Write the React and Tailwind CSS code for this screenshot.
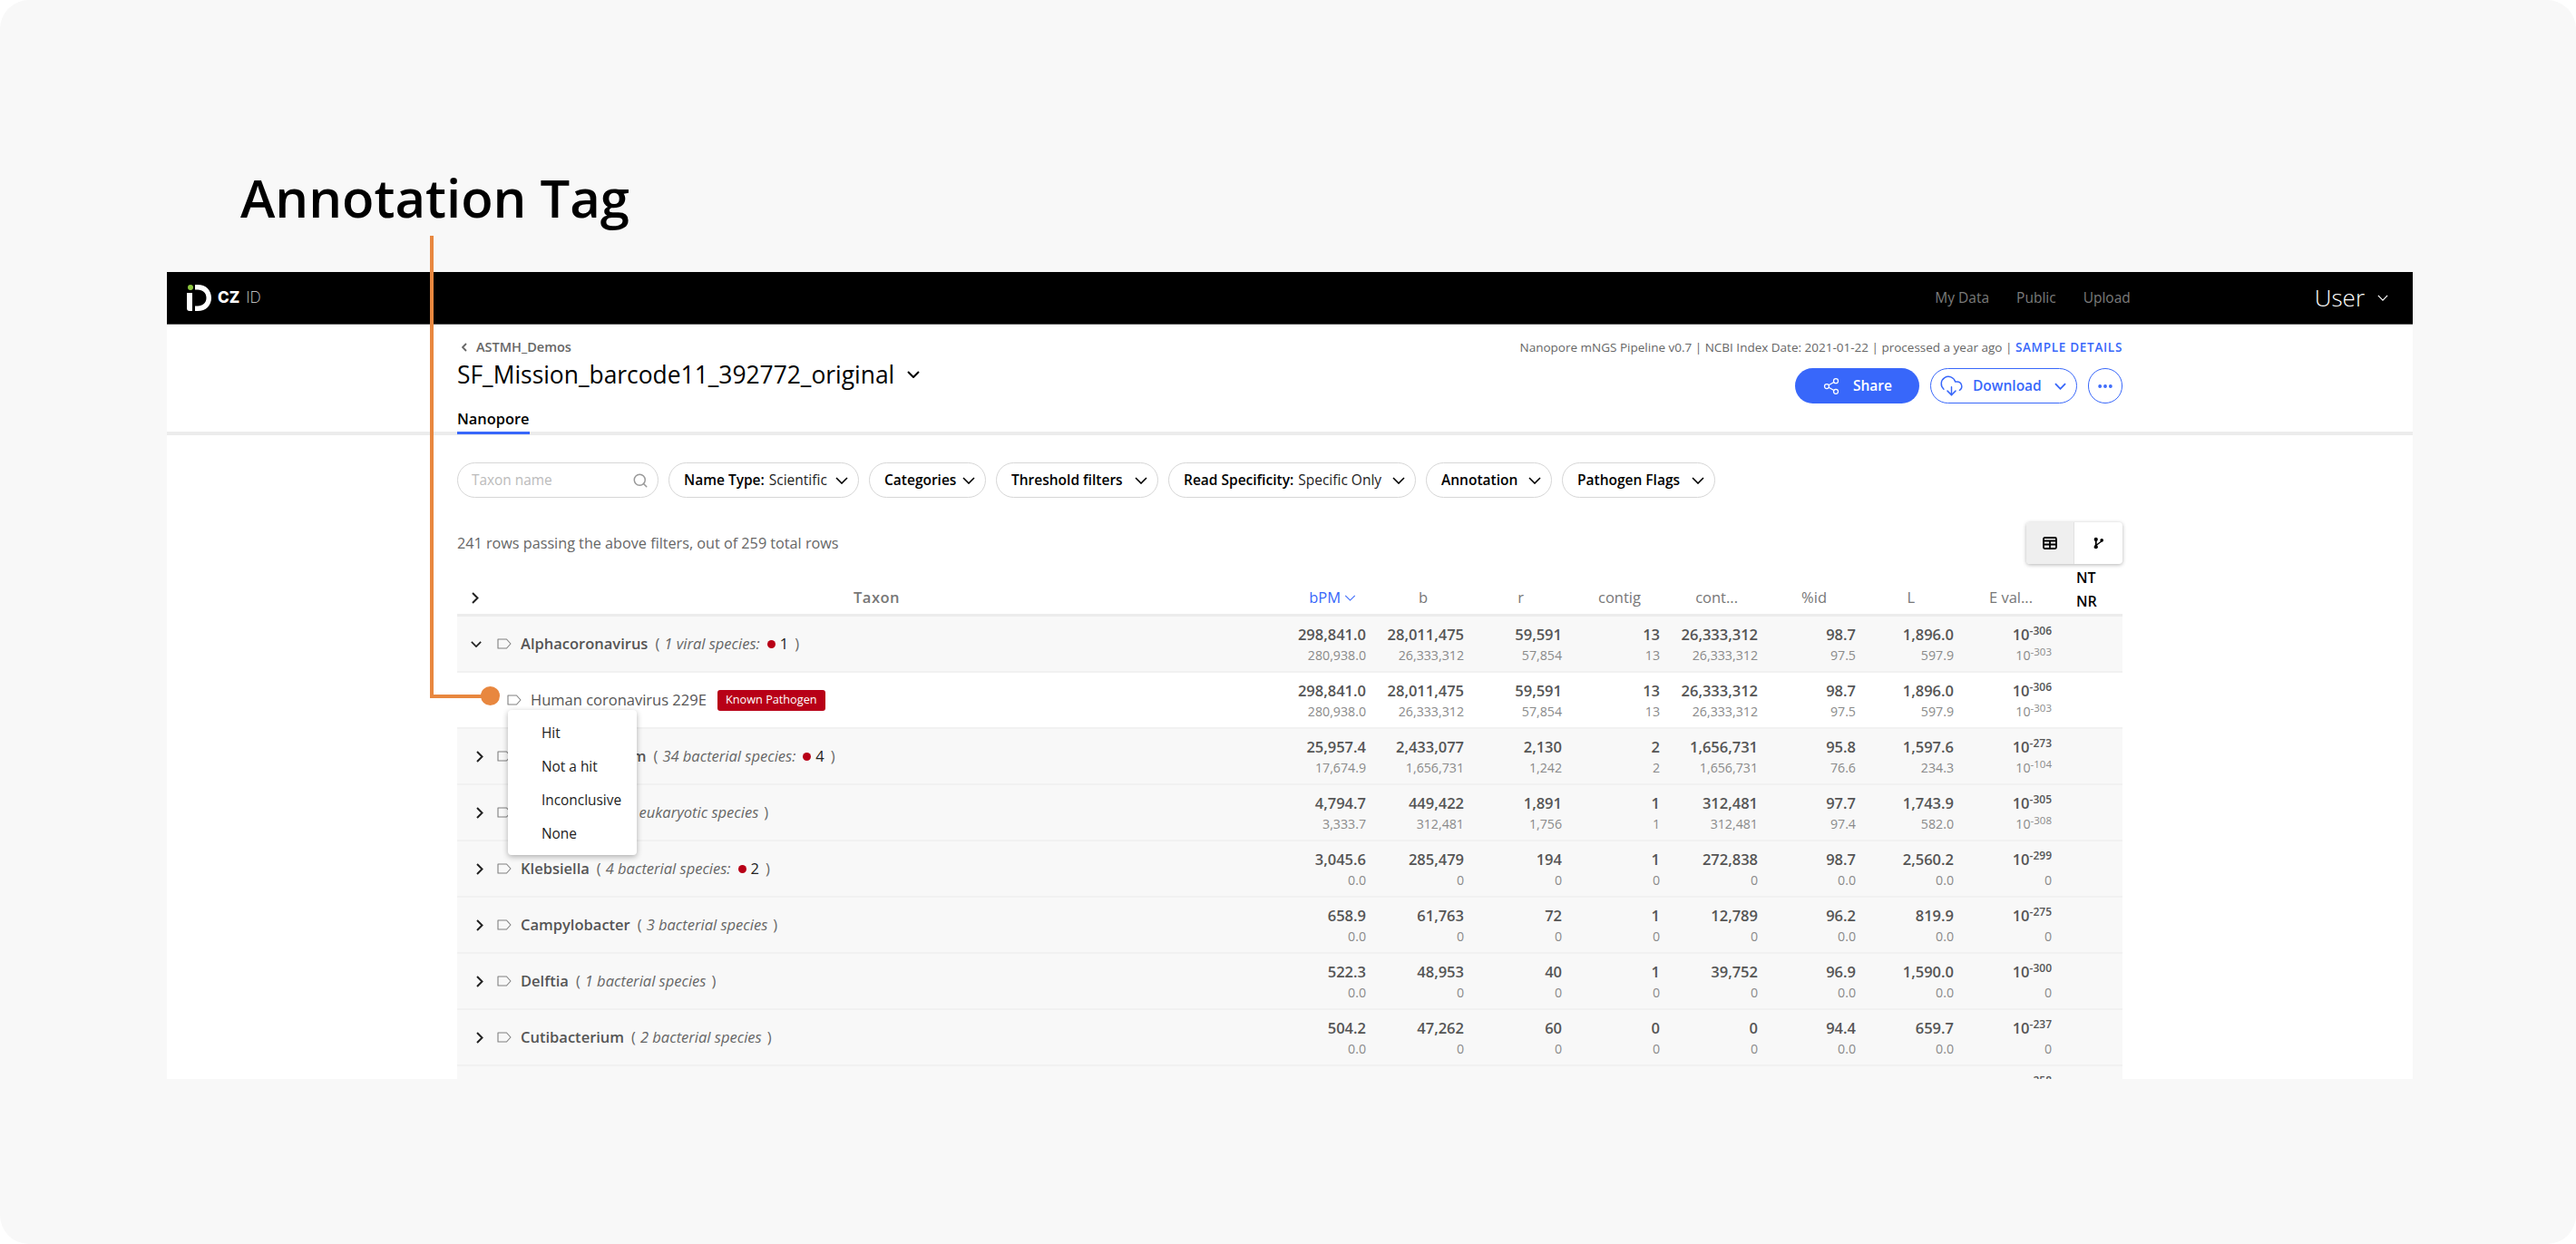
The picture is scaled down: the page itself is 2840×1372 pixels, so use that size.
import React from "react";
import { Search, Share2, CloudDownload, MoreHorizontal } from "lucide-react";

const rows = [
  { name: "Alphacoronavirus", note: "1 viral species:", dot: 1, open: true, a: ["298,841.0", "28,011,475", "59,591", "13", "26,333,312", "98.7", "1,896.0", "-306"], c: ["280,938.0", "26,333,312", "57,854", "13", "26,333,312", "97.5", "597.9", "-303"] },
  { child: true, name: "Human coronavirus 229E", a: ["298,841.0", "28,011,475", "59,591", "13", "26,333,312", "98.7", "1,896.0", "-306"], c: ["280,938.0", "26,333,312", "57,854", "13", "26,333,312", "97.5", "597.9", "-303"] },
  { name: "Corynebacterium", note: "34 bacterial species:", dot: 4, a: ["25,957.4", "2,433,077", "2,130", "2", "1,656,731", "95.8", "1,597.6", "-273"], c: ["17,674.9", "1,656,731", "1,242", "2", "1,656,731", "76.6", "234.3", "-104"] },
  { name: "Plasmodium", note: "1 eukaryotic species", a: ["4,794.7", "449,422", "1,891", "1", "312,481", "97.7", "1,743.9", "-305"], c: ["3,333.7", "312,481", "1,756", "1", "312,481", "97.4", "582.0", "-308"] },
  { name: "Klebsiella", note: "4 bacterial species:", dot: 2, a: ["3,045.6", "285,479", "194", "1", "272,838", "98.7", "2,560.2", "-299"], c: ["0.0", "0", "0", "0", "0", "0.0", "0.0", "0"] },
  { name: "Campylobacter", note: "3 bacterial species", a: ["658.9", "61,763", "72", "1", "12,789", "96.2", "819.9", "-275"], c: ["0.0", "0", "0", "0", "0", "0.0", "0.0", "0"] },
  { name: "Delftia", note: "1 bacterial species", a: ["522.3", "48,953", "40", "1", "39,752", "96.9", "1,590.0", "-300"], c: ["0.0", "0", "0", "0", "0", "0.0", "0.0", "0"] },
  { name: "Cutibacterium", note: "2 bacterial species", a: ["504.2", "47,262", "60", "0", "0", "94.4", "659.7", "-237"], c: ["0.0", "0", "0", "0", "0", "0.0", "0.0", "0"] },
  { name: "Staphylococcus", note: "1 bacterial species", a: ["455.9", "42,855", "50", "1", "15,027", "91.2", "849.7", "-258"], c: ["0.0", "0", "0", "0", "0", "0.0", "0.0", "0"] },
];

const headers = [
  { t: "b", pad: "pr-[40px]" },
  { t: "r", pad: "pr-[42px]" },
  { t: "contig", pad: "pr-[21px]" },
  { t: "cont...", pad: "pr-[22px]" },
  { t: "%id", pad: "pr-[32px]" },
  { t: "L", pad: "pr-[43px]" },
  { t: "E val...", pad: "pr-[21px]" },
];

function Vee({ className, w = 1.6 }) {
  return (
    <svg viewBox="0 0 14 8" className={className} fill="none" stroke="currentColor" strokeWidth={w}>
      <path d="M1 1 L7 7 L13 1" />
    </svg>
  );
}

function Caret({ className }) {
  return (
    <svg viewBox="0 0 8 13" className={`w-[8px] h-[13px] shrink-0 ${className}`} fill="none" stroke="currentColor" strokeWidth="2">
      <path d="M1 1 L6.5 6.5 L1 12" />
    </svg>
  );
}

function TagIcon({ className }) {
  return (
    <svg viewBox="0 0 16 12" className={`w-[16px] h-[12px] shrink-0 text-[#808080] ${className}`} fill="none" stroke="currentColor" strokeWidth="1.1">
      <path d="M1 1 H10.5 L15 6 L10.5 11 H1 Z" strokeLinejoin="round" />
    </svg>
  );
}

function Logo() {
  return (
    <div className="flex items-center">
      <svg viewBox="0 0 27 29" className="w-[27px] h-[29px]">
        <circle cx="4" cy="3" r="3" fill="#8cc63f" />
        <path d="M0 9 H6 V29 H3 Q0 29 0 26 Z" fill="#fff" />
        <path d="M9 0 H12 C21 0 27 6 27 14.5 C27 23 21 29 12 29 H9 V23.5 H12 C17.500 23.500 21.500 20 21.500 14.500 C21.500 9 17.500 5.500 12 5.500 H9 Z" fill="#fff" />
      </svg>
      <span className="ml-[7px] text-[17px] leading-none font-extrabold text-white font-['Inter',sans-serif]">CZ</span>
      <span className="ml-[7px] text-[17px] leading-none font-extralight text-[#ddd] font-['Inter',sans-serif]">ID</span>
    </div>
  );
}

function Pill({ label, value, width }) {
  return (
    <div className={`flex items-center shrink-0 h-[39px] border border-[#d6d6d6] rounded-[20px] pl-[16px] pr-[11px] text-[15.500px] text-black ${width}`}>
      <span className="font-semibold whitespace-nowrap">{label}</span>
      {value && <span className="ml-[5px] whitespace-nowrap text-[#222]">{value}</span>}
      <Vee className="w-[14px] h-[8px] ml-auto shrink-0" />
    </div>
  );
}

function Row({ row }) {
  const bg = row.child ? "bg-white" : "bg-[#f8f8f8]";
  return (
    <div className={`flex h-[62px] shrink-0 border-b-2 border-[#f1f1f1] ${bg}`}>
      <div className={`flex items-center w-[894px] shrink-0 text-[16.500px] ${row.child ? "pl-[55px]" : row.open ? "pl-[15px]" : "pl-[21px]"}`}>
        {row.child ? null : row.open ? (
          <Vee className="w-[12px] h-[7px] shrink-0 text-[#222]" w={2} />
        ) : (
          <Caret className="text-[#222]" />
        )}
        <TagIcon className={row.child ? "" : row.open ? "ml-[17px]" : "ml-[15px]"} />
        {row.child ? (
          <>
            <span className="ml-[10px] text-[#555] whitespace-nowrap">{row.name}</span>
            <span className="ml-[12px] h-[23px] w-[119px] flex items-center justify-center rounded-[3px] bg-[#b80017] text-white text-[12.700px] whitespace-nowrap">Known Pathogen</span>
          </>
        ) : (
          <>
            <span className="ml-[10px] font-semibold text-[#555] whitespace-nowrap">{row.name}</span>
            <span className="ml-[8px] text-[#666] whitespace-nowrap">
              (<span className="ml-[5px] italic">{row.note}</span>
            </span>
            {row.dot && <span className="ml-[8px] w-[9px] h-[9px] rounded-full bg-[#b80017]" />}
            {row.dot && <span className="ml-[5px] text-[#222]">{row.dot}</span>}
            <span className={`${row.dot ? "ml-[7px]" : "ml-[6px]"} text-[#666]`}>)</span>
          </>
        )}
      </div>
      {row.a.map((v, i) => (
        <div key={i} className="w-[108px] text-right pt-[9px] shrink-0 whitespace-nowrap">
          <div className="text-[16.500px] leading-[21px] font-semibold text-[#555]">
            {i === 7 ? (
              <>
                10<sup className="text-[12px] -top-[6px] relative align-baseline">{v}</sup>
              </>
            ) : (
              v
            )}
          </div>
          <div className="text-[14.200px] leading-[26px] text-[#8a8a8a]">
            {i === 7 && row.c[i] !== "0" ? (
              <>
                10<sup className="text-[11.500px] -top-[5px] relative align-baseline">{row.c[i]}</sup>
              </>
            ) : (
              row.c[i]
            )}
          </div>
        </div>
      ))}
    </div>
  );
}

export default function App() {
  return (
    <div className="relative w-[2840px] h-[1372px] overflow-hidden bg-white font-['Open_Sans',sans-serif]">
      <div className="h-full rounded-[32px] bg-[#f8f8f8]">
        <div className="h-[300px] pl-[265px] pt-[176px]">
          <h1 className="text-[58px] leading-[84px] font-semibold text-black whitespace-nowrap">Annotation Tag</h1>
        </div>

        <div className="ml-[184px] w-[2476px] h-[890px] bg-white flex flex-col overflow-hidden">
          <div className="flex items-center shrink-0 h-[58px] bg-black border-b border-[#555] pl-[22px] pr-[27px]">
            <Logo />
            <div className="ml-auto flex items-center text-[15.500px] text-[#7b7b7b]">
              <span className="mr-[30px]">My Data</span>
              <span className="mr-[30px]">Public</span>
              <span>Upload</span>
              <span className="ml-[203px] text-[26px] text-white font-light">User</span>
              <Vee className="ml-[14px] w-[12px] h-[7px] text-white" w={1.4} />
            </div>
          </div>

          <div className="shrink-0 h-[122px] border-b-4 border-[#ececec] pl-[320px] pr-[320px] flex justify-between">
            <div className="flex flex-col">
              <div className="flex items-center mt-[15px] h-[20px] text-[14.500px] font-semibold text-[#666]">
                <svg viewBox="0 0 6 10" className="w-[6px] h-[10px] ml-[5px] mr-[10px]" fill="none" stroke="currentColor" strokeWidth="1.8">
                  <path d="M5 1 L1 5 L5 9" />
                </svg>
                <span>ASTMH_Demos</span>
              </div>
              <div className="flex items-center mt-[2px]">
                <span className="text-[26.400px] leading-[36px] text-black font-medium">SF_Mission_barcode11_392772_original</span>
                <Vee className="ml-[14px] w-[14px] h-[8px] text-black" w={2} />
              </div>
              <div className="mt-auto -mb-[3px] h-[30px] w-fit border-b-[3px] border-[#3867fa] text-[16.400px] leading-[26px] font-semibold text-black">Nanopore</div>
            </div>
            <div className="flex flex-col items-end">
              <div className="mt-[15px] h-[20px] leading-[20px] text-[13.500px] text-[#666] whitespace-nowrap">
                Nanopore mNGS Pipeline v0.7 | NCBI Index Date: 2021-01-22 | processed a year ago |{" "}
                <span className="font-semibold text-[#3867fa] tracking-[0.7px]">SAMPLE DETAILS</span>
              </div>
              <div className="flex mt-[13px]">
                <div className="flex items-center justify-center w-[137px] h-[39px] rounded-[20px] bg-[#3867fa] text-white text-[15.500px] font-semibold">
                  <Share2 className="w-[20px] h-[20px] mr-[14px]" strokeWidth={1.5} />
                  Share
                </div>
                <div className="flex items-center ml-[12px] w-[162px] h-[39px] pl-[9px] rounded-[20px] border border-[#3867fa] text-[#3867fa] text-[15.500px] font-semibold">
                  <CloudDownload className="w-[27px] h-[27px] mr-[10px]" strokeWidth={1.3} />
                  Download
                  <Vee className="w-[13px] h-[8px] ml-[14px]" w={2} />
                </div>
                <div className="flex items-center justify-center ml-[12px] w-[38px] h-[39px] rounded-full border border-[#3867fa] text-[#3867fa]">
                  <MoreHorizontal className="w-[20px] h-[20px]" strokeWidth={2.6} />
                </div>
              </div>
            </div>
          </div>

          <div className="flex-1 min-h-0 pl-[320px] pr-[320px] overflow-hidden">
            <div className="flex gap-[11px] mt-[30px]">
              <div className="flex items-center shrink-0 w-[222px] h-[39px] border border-[#d6d6d6] rounded-[20px] pl-[15px] pr-[10px] text-[15.400px] text-[#bbb]">
                Taxon name
                <Search className="ml-auto w-[18px] h-[18px] text-[#999]" strokeWidth={2} />
              </div>
              <Pill label="Name Type:" value="Scientific" width="w-[210px]" />
              <Pill label="Categories" width="w-[129px]" />
              <Pill label="Threshold filters" width="w-[179px]" />
              <Pill label="Read Specificity:" value="Specific Only" width="w-[273px]" />
              <Pill label="Annotation" width="w-[139px]" />
              <Pill label="Pathogen Flags" width="w-[169px]" />
            </div>

            <div className="flex items-center justify-between mt-[27px] h-[46px]">
              <span className="text-[16.200px] text-[#666]">241 rows passing the above filters, out of 259 total rows</span>
              <div className="flex h-[46px] rounded-[4px] overflow-hidden shadow-[0_1px_4px_rgba(0,0,0,0.3)] bg-white">
                <div className="w-[53px] flex items-center justify-center bg-[#efefef] border-r border-[#e2e2e2]">
                  <svg viewBox="0 0 16 14" className="w-[16px] h-[14px] text-black" fill="none" stroke="currentColor" strokeWidth="1.8">
                    <rect x="1" y="1" width="14" height="12" rx="1.5" />
                    <path d="M1 4.500 H15 M1 8.500 H15 M8 4.500 V13" />
                  </svg>
                </div>
                <div className="w-[53px] flex items-center justify-center">
                  <svg viewBox="0 0 12 14" className="w-[11px] h-[14px] text-black" fill="currentColor">
                    <circle cx="3" cy="2.500" r="2.300" />
                    <circle cx="10" cy="3.500" r="2" />
                    <circle cx="3" cy="11.500" r="2.300" />
                    <path d="M2 2.500 H4 V11.500 H2 Z M3 9 L9.500 4 L10.500 5 L4 10 Z" />
                  </svg>
                </div>
              </div>
            </div>

            <div className="flex items-center h-[58px] pt-[19px] border-b-[3px] border-[#ececec] text-[16.500px]">
              <div className="w-[894px] shrink-0 flex items-center pl-[16px] font-semibold text-[#777]">
                <Caret className="text-[#222]" />
                <span className="ml-[413px] tracking-[0.5px]">Taxon</span>
              </div>
              <div className="w-[108px] shrink-0 flex items-center justify-end pr-[11px] text-[#3867fa]">
                bPM
                <Vee className="ml-[4px] w-[13px] h-[7px]" w={1.2} />
              </div>
              {headers.map((h) => (
                <div key={h.t} className={`w-[108px] shrink-0 text-right text-[#777] ${h.pad}`}>
                  {h.t}
                </div>
              ))}
              <div className="self-start -mt-[17px] pl-[27px] flex flex-col text-[16px] leading-[26px] font-semibold text-black">
                <span>NT</span>
                <span>NR</span>
              </div>
            </div>

            <div className="relative">
              {rows.map((row) => (
                <Row key={row.name} row={row} />
              ))}
              {/* annotation menu, open over the rows */}
              <div className="absolute left-[56px] top-[103px] w-[142px] h-[160px] rounded-[4px] bg-white shadow-[0_2px_6px_rgba(0,0,0,0.3)] pt-[7px] pl-[37px] text-[15.400px] leading-[37px] text-[#222]">
                <div>Hit</div>
                <div>Not a hit</div>
                <div>Inconclusive</div>
                <div>None</div>
              </div>
            </div>
          </div>
        </div>
      </div>

      {/* orange callout line */}
      <div className="absolute left-[474px] top-[260px] w-[4px] h-[510px] bg-[#e8873f]" />
      <div className="absolute left-[474px] top-[766px] w-[60px] h-[4px] bg-[#e8873f]" />
      <div className="absolute left-[530px] top-[757px] w-[21px] h-[21px] rounded-full bg-[#e8873f]" />
    </div>
  );
}
